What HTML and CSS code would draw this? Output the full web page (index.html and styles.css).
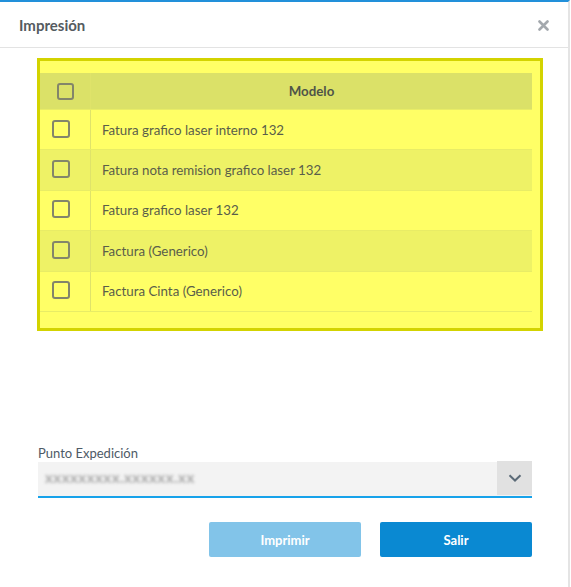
FILE: index.html
```html
<!DOCTYPE html>
<html lang="es">
<head>
<meta charset="utf-8">
<title>Impresión</title>
<link rel="stylesheet" href="styles.css">
</head>
<body>
<div class="dialog">
  <div class="header">
    <span class="title">Impresión</span>
    <span class="close" aria-label="Cerrar">
      <svg width="11" height="11" viewBox="0 0 11 11"><path d="M1.5 1.5 L9.5 9.5 M9.5 1.5 L1.5 9.5" stroke="#a3a8ad" stroke-width="2.6" stroke-linecap="round"/></svg>
    </span>
  </div>
  <div class="content">
    <div class="highlight">
      <div class="table">
        <div class="row head">
          <div class="cell check"><span class="box head-box"></span></div>
          <div class="cell name">Modelo</div>
        </div>
        <div class="row">
          <div class="cell check"><span class="box"></span></div>
          <div class="cell name">Fatura grafico laser interno 132</div>
        </div>
        <div class="row alt">
          <div class="cell check"><span class="box"></span></div>
          <div class="cell name">Fatura nota remision grafico laser 132</div>
        </div>
        <div class="row">
          <div class="cell check"><span class="box"></span></div>
          <div class="cell name">Fatura grafico laser 132</div>
        </div>
        <div class="row alt">
          <div class="cell check"><span class="box"></span></div>
          <div class="cell name">Factura (Generico)</div>
        </div>
        <div class="row">
          <div class="cell check"><span class="box"></span></div>
          <div class="cell name">Factura Cinta (Generico)</div>
        </div>
      </div>
    </div>

    <div class="field">
      <label class="label">Punto Expedición</label>
      <div class="select">
        <span class="value">xxxxxxxxx.xxxxxx.xx</span>
        <span class="arrow">
          <svg width="14" height="8" viewBox="0 0 14 8"><path d="M1.5 1.2 L7 6.5 L12.5 1.2" fill="none" stroke="#5b6a77" stroke-width="2"/></svg>
        </span>
      </div>
    </div>

    <div class="actions">
      <button class="btn btn-disabled">Imprimir</button>
      <button class="btn btn-primary">Salir</button>
    </div>
  </div>
</div>
</body>
</html>
```

FILE: styles.css
```css
html, body {
  margin: 0;
  padding: 0;
  background: #ffffff;
}

body {
  font-family: Lato, "Open Sans", Arial, sans-serif;
  color: #555555;
}

.dialog {
  width: 568px;
  height: 585px;
  border-top: 2px solid #2290da;
  border-right: 2px solid #e4e4e4;
  background: #ffffff;
}

.header {
  height: 46px;
  box-sizing: border-box;
  border-bottom: 1px solid #e3e3e3;
  display: flex;
  align-items: center;
  justify-content: space-between;
  padding: 0 19px 0 19px;
}

.title {
  font-size: 15px;
  font-weight: 700;
  color: #555b60;
}

.close {
  display: flex;
  margin-top: 1px;
}

.content {
  padding: 10px 36px 0 37px;
}

.highlight {
  width: 506px;
  height: 273px;
  box-sizing: border-box;
  border: 3px solid #d3d300;
  background: #ffff66;
  padding: 12px 8px 0 0;
}

.table {
  width: 492px;
  border-bottom: 1px solid #e8ec66;
}

.row {
  display: flex;
  height: 40.4px;
  box-sizing: border-box;
  border-top: 1px solid #e8ec66;
  background: #ffff66;
}

.row.alt {
  background: #eef266;
}

.row.head {
  height: 36px;
  border-top: none;
  background: #dbe168;
}

.cell {
  display: flex;
  align-items: center;
  font-size: 13.3px;
  color: #5a5e4a;
}

.cell.check {
  width: 51px;
  box-sizing: border-box;
  border-right: 1px solid #dfe36a;
  padding-left: 12px;
}

.cell.name {
  flex: 1;
  padding-left: 11px;
}

.row.head .cell.name {
  justify-content: center;
  font-weight: 700;
  padding-left: 0;
  color: #4f5448;
}

.box {
  width: 18px;
  height: 18px;
  box-sizing: border-box;
  border: 2px solid #83856a;
  border-radius: 3px;
  margin-top: -2px;
}

.box.head-box {
  width: 17px;
  height: 17px;
  margin-left: 5px;
  margin-top: 1px;
}

.field {
  margin-top: 114px;
}

.label {
  display: block;
  font-size: 13px;
  color: #4e5a66;
  margin-left: 1px;
  line-height: 16px;
}

.select {
  margin-top: 1px;
  margin-left: 1px;
  width: 494px;
  height: 36px;
  box-sizing: border-box;
  background: #f3f3f3;
  border-bottom: 2px solid #17a2ea;
  display: flex;
  align-items: center;
  justify-content: space-between;
}

.value {
  padding-left: 7px;
  font-size: 15px;
  font-weight: 700;
  letter-spacing: 0.5px;
  color: #a8a8a8;
  filter: blur(1.4px);
  margin-top: -4px;
}

.arrow {
  width: 35px;
  height: 100%;
  background: #e1e1e1;
  display: flex;
  align-items: center;
  justify-content: center;
  margin-top: -2px;
}

.actions {
  display: flex;
  justify-content: flex-end;
  gap: 19px;
  margin-top: 24px;
  width: 495px;
}

.btn {
  width: 152px;
  height: 35px;
  border: none;
  border-radius: 2px;
  font-family: Lato, "Open Sans", Arial, sans-serif;
  font-size: 13px;
  font-weight: 700;
  color: #ffffff;
}

.btn-disabled {
  background: #82c4e9;
}

.btn-primary {
  background: #0a89d2;
}
```
